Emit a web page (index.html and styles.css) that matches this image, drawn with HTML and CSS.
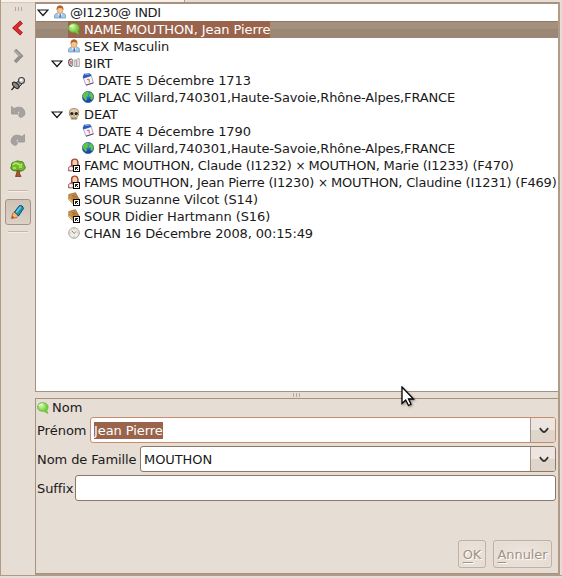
FILE: index.html
```html
<!DOCTYPE html>
<html lang="fr">
<head>
<meta charset="utf-8">
<title>INDI</title>
<link rel="stylesheet" href="styles.css">
</head>
<body>
<svg class="defs" aria-hidden="true">
  <defs>
    <linearGradient id="wood" x2="1" y2="1"><stop stop-color="#dda35b"/><stop offset="1" stop-color="#a5662a"/></linearGradient>
    <radialGradient id="lime" cx=".4" cy=".3"><stop stop-color="#d3f8a8"/><stop offset="1" stop-color="#72cc3c"/></radialGradient>
    <radialGradient id="sea" cx=".4" cy=".3"><stop stop-color="#54a4f4"/><stop offset="1" stop-color="#1748ac"/></radialGradient>
  </defs>
  <symbol id="person" viewBox="0 0 12 14">
    <path d="M.5 13V10.500Q1 8.500 3 8.200H9Q11.300 8.500 11.600 10.500V13Z" fill="#a4c9ee" stroke="#6690c0" stroke-width=".7"/>
    <path d="M3.500 8.300H8.500L6.200 13Z" fill="#fff"/><path d="M5.700 9H6.700L7 12.500H5.300Z" fill="#3c5f96"/>
    <ellipse cx="6" cy="4.700" rx="3" ry="3.900" fill="#f6c392" stroke="#c98744" stroke-width=".6"/>
    <path d="M2.700 5Q2 .4 6 .4T9.300 5Q8.500 2.800 6 3T2.700 5" fill="#b66224"/>
  </symbol>
  <symbol id="bubble" viewBox="0 0 12 12">
    <path d="M5.500.6C2.400.6.500 2.500.5 5S2.300 9.300 5.200 9.300H7L10.800 11.400 9.800 8.300C12.400 5.500 11 .6 5.500.6Z" fill="url(#lime)" stroke="#68b53c" stroke-width=".7"/>
    <path d="M2 4Q3 1.800 6 2" fill="none" stroke="#efffe0" stroke-width="1.200"/>
  </symbol>
  <symbol id="birth" viewBox="0 0 12 10">
    <path d="M4 1Q.6.800.7 4.500T4 8.300" fill="#eee" stroke="#555" stroke-width="1.200"/><path d="M4.500 1V8.300" stroke="#999"/><path d="M3 2.800V6.500" stroke="#dc4558" stroke-width="1.300"/>
    <path d="M6.200 2V8.500H8.300V2ZM8.800 1.500V8.500H11.300V.7H9.600Z" fill="#eceaea" stroke="#999" stroke-width=".8"/>
  </symbol>
  <symbol id="date" viewBox="0 0 12 13">
    <path d="M1 4 9 1.500 11.400 9.900 4 12.200Z" fill="#f6f5fb" stroke="#8c8cb0" stroke-width=".7"/>
    <path d="M.8 3.700 2 .8 8 .3 9.300 3 1.500 5.600Z" fill="#2e58b5"/><path d="M3 1.400 7.500 1" stroke="#8fb4ea"/>
    <path d="M5 6.700 7 6.100 7.300 9.500" fill="none" stroke="#d2616c" stroke-width="1"/><path d="M4 12.200 11.400 9.900" stroke="#3d3d70" stroke-width=".9"/>
  </symbol>
  <symbol id="globe" viewBox="0 0 12 12">
    <circle cx="6" cy="6" r="5.700" fill="url(#sea)" stroke="#21518c" stroke-width=".5"/>
    <path d="M1 3.500Q2.500.8 5.500.8L7 2 5.500 3.500 6 5 4 6 5 8 4 10 2.300 8 .8 5.800ZM7.500 1 10.300 2.500 11.500 6 10 9.300 8.300 7.800 8.800 6 6.800 5.200 7.500 3.200Z" fill="#5dc83c"/>
  </symbol>
  <symbol id="skull" viewBox="0 0 12 13">
    <path d="M1 6Q.3.7 6 .6T11 6Q11.500 8.500 9.200 9.300V12H2.900V9.300Q.500 8.500 1 6Z" fill="#dfcfaa" stroke="#8c7048" stroke-width=".8"/>
    <circle cx="3.700" cy="6" r="1.800" fill="#32231d"/><circle cx="8.400" cy="6" r="1.800" fill="#32231d"/><path d="M6 7.500V9M4.500 10V12M6 10V12M7.600 10V12" stroke="#6c5237" stroke-width=".7"/>
  </symbol>
  <symbol id="link" viewBox="0 0 7 7">
    <rect x=".5" y=".5" width="6" height="6" fill="#fff" stroke="#000"/><path d="M2.500 5V2.500H5M2.700 2.700 5 5" fill="none" stroke="#000" stroke-width=".9"/>
  </symbol>
  <symbol id="family" viewBox="0 0 12 14">
    <path d="M3 7Q2 .6 6.500.6T10.700 6L11 9H3Z" fill="#a04a36"/><ellipse cx="6.800" cy="5" rx="2.400" ry="3.200" fill="#f8cfac"/>
    <path d="M.4 12.800V9.800L3 7.700H10.500L11.600 9.500V12.800Z" fill="#d94f4c" stroke="#9b3030" stroke-width=".6"/><rect x=".5" y="8.500" width="5" height="4.300" rx="2" fill="#fbeae6" stroke="#775555" stroke-width=".6"/>
    <use href="#link" x="5" y="7" width="7" height="7"/>
  </symbol>
  <symbol id="source" viewBox="0 0 12 14">
    <path d="M.8 2.500 7.500.7 11.300 7.500 5 11.800.8 7.500Z" fill="url(#wood)" stroke="#8a5c2a" stroke-width=".7"/><path d="M1.200 7 5 10.800 8 9" fill="none" stroke="#f0c95c" stroke-width="1.100"/><path d="M3.500 3.800 6.700 2.900M4.500 5.300 7.800 4.400" stroke="#8a5724" stroke-width=".7"/>
    <use href="#link" x="5" y="7" width="7" height="7"/>
  </symbol>
  <symbol id="clock" viewBox="0 0 12 12">
    <circle cx="6" cy="6" r="5.300" fill="#f1ede5" stroke="#aaa49c"/><path d="M3.700 3.500 6 6.500 8.400 4.200" fill="none" stroke="#888" stroke-width="1"/><path d="M6 1.500V2.500M6 9.500V10.500M1.500 6H2.500M9.500 6H10.500" stroke="#aaa"/>
  </symbol>
  <symbol id="expander" viewBox="0 0 12 8"><path d="M1 1H11L6 6.500Z" fill="#fff" stroke="#111" stroke-width="1.200"/></symbol>
  <symbol id="drop" viewBox="0 0 10 7"><path d="M.8 1.200 3.800 4.500Q5 5.600 6.200 4.500L9.200 1.200" fill="none" stroke="#363432" stroke-width="1.800"/></symbol>
</svg>

<div class="window">
  <div class="tabline"><span class="tab"></span></div>
  <div class="workspace">
    <nav class="toolbar">
      <span class="grip"></span>
      <svg class="tool back" viewBox="0 0 16 16"><path d="M11.500 2 5 8 11.500 14" fill="none" stroke="#991c20" stroke-width="4"/><path d="M11 2.500 5 8 11 13.500" fill="none" stroke="#e22a2c" stroke-width="2.600"/></svg>
      <svg class="tool forward" viewBox="0 0 16 16"><path d="M5 2 11 8 5 14" fill="none" stroke="#918e8b" stroke-width="3.500"/><path d="M5 3 10.500 8" fill="none" stroke="#b1aeab" stroke-width="1.500"/></svg>
      <svg class="tool pin" viewBox="0 0 16 16"><path d="M1.500 14 5 10" stroke="#222" stroke-width="1.200"/><path d="M5 8 9 4.500 12 8 9 11Z" fill="#aaa" stroke="#333"/><circle cx="11.500" cy="4.500" r="3" fill="#ccc" stroke="#444" stroke-width="1.100"/><ellipse cx="5.700" cy="9.300" rx="4" ry="2.200" transform="rotate(42 5.700 9.300)" fill="#888" stroke="#222" stroke-width="1.100"/><circle cx="11" cy="4" r="1.300" fill="#fff"/></svg>
      <svg class="tool undo" viewBox="0 0 16 16"><path d="M1.500 2.500 4 4.500Q12 1 14.300 6.500T10.500 13.500L8.500 12Q12 6.500 6.500 7.500L8.500 10H1.500Z" fill="#a4a19e" stroke="#989593" stroke-width=".8"/></svg>
      <svg class="tool redo" viewBox="0 0 16 16"><path d="M14.500 2.500 12 4.500Q4 1 1.700 6.500T5.500 13.500L7.500 12Q4 6.500 9.500 7.500L7.500 10H14.500Z" fill="#a4a19e" stroke="#989593" stroke-width=".8"/></svg>
      <svg class="tool tree-tool" viewBox="0 0 16 18"><path d="M6 9 7 12 5.500 16.500H11L9.300 13 11 9Z" fill="#a55725" stroke="#633314" stroke-width=".7"/><path d="M2 10Q-.5 8 1.500 6 1 2 5 2 7 0 10 1.500 14 1 14 5 17 8 13 10.500 10 12 8 10 5 12 2 10Z" fill="#73b72e" stroke="#437b19" stroke-width=".9"/><path d="M3 5Q5 2 8 4T12 4M3 8H6M9 7H12" fill="none" stroke="#b6e96c" stroke-width="1.700"/></svg>
      <span class="rule"></span>
      <button class="toggle" aria-label="Crayon"><svg viewBox="0 0 16 16"><path d="M1.500 14.500 2.500 9.500 5.500 7.500 8.500 11 7 13.500Z" fill="#f2ba75" stroke="#9e5324" stroke-width=".7"/><path d="M1.500 14.500 2.300 11.500 4.600 13.700Z" fill="#d34619"/><path d="M4.500 8 9.500 1.500Q13 1 13.500 4.500L8.500 12Z" fill="#1e93b5" stroke="#124d69"/><path d="M6.200 8.500 10.800 2.800" stroke="#6bd3e6" stroke-width="1.500"/></svg></button>
      <span class="rule last"></span>
    </nav>
    <main class="content">
      <section class="tree">
        <div class="row root"><svg class="exp"><use href="#expander"/></svg><svg class="ico tall"><use href="#person"/></svg><span class="indi">@I1230@ INDI</span></div>
        <div class="row l1 selected"><span class="pick"><svg class="ico"><use href="#bubble"/></svg><span>NAME MOUTHON, Jean Pierre</span></span></div>
        <div class="row l1"><svg class="ico tall"><use href="#person"/></svg><span>SEX Masculin</span></div>
        <div class="row branch"><svg class="exp"><use href="#expander"/></svg><svg class="ico birth"><use href="#birth"/></svg><span>BIRT</span></div>
        <div class="row l2"><svg class="ico date"><use href="#date"/></svg><span>DATE 5 Décembre 1713</span></div>
        <div class="row l2"><svg class="ico"><use href="#globe"/></svg><span class="place">PLAC Villard,740301,Haute-Savoie,Rhône-Alpes,FRANCE</span></div>
        <div class="row branch"><svg class="exp"><use href="#expander"/></svg><svg class="ico"><use href="#skull"/></svg><span>DEAT</span></div>
        <div class="row l2"><svg class="ico date"><use href="#date"/></svg><span>DATE 4 Décembre 1790</span></div>
        <div class="row l2"><svg class="ico"><use href="#globe"/></svg><span class="place">PLAC Villard,740301,Haute-Savoie,Rhône-Alpes,FRANCE</span></div>
        <div class="row l1"><svg class="ico tall"><use href="#family"/></svg><span class="couple">FAMC MOUTHON, Claude (I1232) <i>×</i> MOUTHON, Marie (I1233) (F470)</span></div>
        <div class="row l1"><svg class="ico tall"><use href="#family"/></svg><span class="couple">FAMS MOUTHON, Jean Pierre (I1230) <i>×</i> MOUTHON, Claudine (I1231) (F469)</span></div>
        <div class="row l1"><svg class="ico tall"><use href="#source"/></svg><span>SOUR Suzanne Vilcot (S14)</span></div>
        <div class="row l1"><svg class="ico tall"><use href="#source"/></svg><span>SOUR Didier Hartmann (S16)</span></div>
        <div class="row l1"><svg class="ico"><use href="#clock"/></svg><span class="change">CHAN 16 Décembre 2008, 00:15:49</span></div>
      </section>
      <div class="splitter"><span class="grip"></span></div>
      <section class="form">
        <h1><svg class="ico"><use href="#bubble"/></svg><span>Nom</span></h1>
        <div class="field"><label class="first">Prénom</label><div class="entry focus"><span class="value"><mark>Jean Pierre</mark></span><span class="arrow"><svg><use href="#drop"/></svg></span></div></div>
        <div class="field"><label class="family">Nom de Famille</label><div class="entry"><span class="value">MOUTHON</span><span class="arrow"><svg><use href="#drop"/></svg></span></div></div>
        <div class="field"><label class="suffix">Suffix</label><div class="entry"></div></div>
        <div class="actions"><button class="ok" disabled><u>O</u>K</button><button class="cancel" disabled><u>A</u>nnuler</button></div>
      </section>
    </main>
  </div>
</div>
<svg class="cursor" viewBox="0 0 14 21"><path d="M1 1V17.500L4.700 14 7.500 19.500 10 18.300 7.500 13H12.500Z" fill="#fff" stroke="#000" stroke-width="1.300"/></svg>
</body>
</html>
```
FILE: styles.css
```css
* { box-sizing: border-box; }
body { margin: 0; width: 562px; height: 578px; overflow: hidden; background: #e6ddd4; color: #1a1a1a; font: 13px/17px "DejaVu Sans", sans-serif; }
svg { display: block; flex: none; }
.defs { position: absolute; width: 0; height: 0; }
.window { width: 562px; height: 576px; border-left: 1px solid #b09b88; border-bottom: 1px solid #b09b88; }
.tabline { height: 2px; }
.tab { display: block; width: 184px; height: 2px; background: #f8f1e9; border-right: 1px solid #b09b88; }
.workspace { display: flex; height: 573px; }
.toolbar { width: 34px; display: flex; flex-direction: column; align-items: center; padding-top: 4px; border-top: 1px solid #d7cabd; }
.grip { width: 7px; height: 4px; background: repeating-linear-gradient(90deg, #b8a796 0 1px, transparent 1px 3px); }
.tool { width: 16px; height: 16px; }
.back { margin-top: 9px; }
.forward, .pin, .undo, .redo { margin-top: 12px; }
.tree-tool { height: 18px; margin-top: 12px; }
.rule { width: 20px; height: 2px; margin-top: 12px; background: #c6b7a8; border-bottom: 1px solid #f3eee9; }
.toggle { width: 26px; height: 26px; margin-top: 7px; padding: 4px; border: 1px solid #a59585; border-radius: 3px; background: linear-gradient(#cfc2b7, #dcd1c6); }
.toggle svg { width: 16px; height: 16px; }
.rule.last { margin-top: 6px; }
.content { width: 525px; display: flex; flex-direction: column; border-right: 2px solid #b09b88; border-bottom: 1px solid #b09b88; }
.tree { height: 390px; border: solid #a6927f; border-width: 2px 0 1px 1px; background: #fff; }
.row { height: 17px; display: flex; align-items: center; white-space: nowrap; letter-spacing: -.09px; }
.indi { letter-spacing: -.3px; }
.place { letter-spacing: -.15px; }
.couple { letter-spacing: -.19px; }
.couple i { display: inline-block; width: 9px; font-style: normal; font-size: 12px; }
.change { letter-spacing: -.14px; }
.root { padding-left: 1px; }
.branch { padding-left: 15px; }
.l1 { padding-left: 32px; }
.l2 { padding-left: 46px; }
.exp { width: 12px; height: 8px; margin-right: 5px; }
.ico { width: 12px; height: 12px; margin: 0 4px 2px 0; }
.ico.tall { height: 14px; }
.ico.date { height: 13px; }
.ico.birth { height: 10px; }
.selected { background: linear-gradient(#8d7a69 0 1px, #a58f7d 1px 8px, #9b8775 8px); color: #fff; }
.pick { display: flex; align-items: center; height: 17px; background: #99634c; }
.splitter { height: 6px; display: flex; justify-content: center; align-items: center; }
.form { flex: 1; border: solid #a6927f; border-width: 1px 0 1px 1px; padding: 0 2px 0 1px; display: flex; flex-direction: column; }
h1 { display: flex; align-items: center; height: 17px; margin: 0 0 1px -1px; padding-left: 1px; font: inherit; }
h1 .ico { margin: 0 3px 0 0; }
.field { display: flex; align-items: center; height: 26px; margin-bottom: 3px; white-space: nowrap; letter-spacing: -.08px; }
.first { width: 53px; letter-spacing: 0; }
.family { width: 103px; }
.suffix { width: 38px; }
.entry { flex: 1; display: flex; height: 26px; border: 1px solid #8a7868; border-radius: 3px; background: #fff; overflow: hidden; }
.entry.focus { border-color: #c98b70; }
.value { flex: 1; display: flex; align-items: center; padding-left: 3px; }
mark { background: #99634c; color: #fff; }
.arrow { width: 25px; border-left: 1px solid #a29486; display: flex; align-items: center; justify-content: center; background: linear-gradient(#ede6e0 0 50%, #e0d5cb 50%); }
.arrow svg { width: 10px; height: 7px; margin-left: 2px; }
.actions { display: flex; justify-content: flex-end; gap: 7px; margin: auto 4px 5px 0; }
.actions button { height: 28px; padding: 0; font: inherit; color: #a49280; text-shadow: 1px 1px #fff; border: 1px solid #c0b0a1; border-radius: 3px; background: radial-gradient(#ede6e0, #e4dad0); box-shadow: inset 0 0 0 1px #eae2da; letter-spacing: -.1px; }
.actions .ok { width: 28px; }
.actions .cancel { width: 59px; }
u { text-underline-offset: 3px; }
.cursor { position: absolute; left: 401px; top: 386px; width: 14px; height: 21px; filter: drop-shadow(1px 1px 1px #0006); }
```
